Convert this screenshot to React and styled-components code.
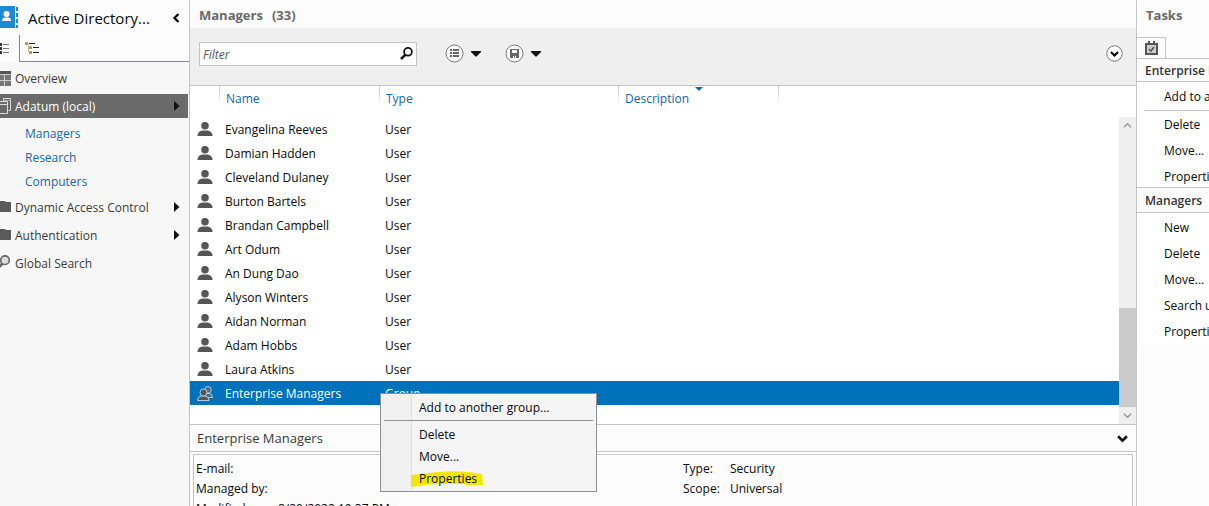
import React from "react";
import styled, { createGlobalStyle, css } from "styled-components";

const line = "#c4c4c4";
const blue = "#0072bc";

const Global = createGlobalStyle`
  * { box-sizing: border-box; }
  body { margin: 0; overflow: hidden; background: #fcfcfc; color: #080808;
    font-family: "Open Sans", "Noto Sans", sans-serif; font-size: 12px; line-height: 16px; }
  button, input { font: inherit; color: inherit; }
  button { border: 0; padding: 0; background: none; text-align: left; white-space: nowrap; }
  h1, h2, h3, p, ul, dl, dd { margin: 0; padding: 0; }
  ul { list-style: none; }
  svg { display: block; flex: none; }
`;

const Shell = styled.div`
  display: grid;
  grid-template-columns: 190px minmax(0, 1fr) 73px;
  height: 100vh;
  overflow: hidden;
`;

const Sidebar = styled.aside`
  display: flex;
  flex-direction: column;
  border-right: 1px solid ${line};
  background: #f7f7f7;
  min-width: 0;
`;
const Brand = styled.header`
  display: flex;
  align-items: center;
  height: 35px;
  background: #fcfcfc;
  padding-right: 9px;
`;
const BrandTitle = styled.h1`
  flex: 1;
  padding-left: 10px;
  font-size: 15px;
  line-height: 20px;
  font-weight: 400;
  white-space: nowrap;
`;
const ViewTabs = styled.div`
  display: flex;
  height: 27px;
  background: #fcfcfc;
`;
const ViewTab = styled.button`
  display: flex;
  align-items: center;
  ${(p) =>
    p.$active
      ? css`width: 20px; border-right: 1px solid #85858f;`
      : css`flex: 1; padding-left: 5px; border-bottom: 1px solid #85858f;`}
`;
const Nav = styled.nav`
  padding-top: 4px;
`;
const NavLink = styled.a`
  display: flex;
  align-items: center;
  height: 24px;
  margin: 0 1px 4px 0;
  padding-right: 8px;
  color: ${(p) => (p.$active ? "#fff" : "#3a3a3a")};
  background: ${(p) => (p.$active ? "#6a6a6a" : "transparent")};
  text-decoration: none;
  white-space: nowrap;
`;
const NavIcon = styled.span`
  width: 15px;
  flex: none;
`;
const NavLabel = styled.span`
  flex: 1;
  padding-top: 1px;
`;
const SubList = styled.ul`
  padding-bottom: 1px;
`;
const SubLink = styled.a`
  display: block;
  padding: 4px 0 4px 25px;
  color: #1068b8;
  text-decoration: none;
`;

const Main = styled.main`
  display: flex;
  flex-direction: column;
  min-width: 0;
  background: #fcfcfc;
`;
const PaneTitle = styled.h2`
  display: flex;
  gap: 9px;
  height: ${(p) => (p.$tall ? "37px" : "28px")};
  flex: none;
  padding: 6px 9px 0;
  font-size: 13px;
  line-height: 18px;
  font-weight: 700;
  color: #6a6a6a;
`;
const Toolbar = styled.div`
  display: flex;
  align-items: center;
  flex: none;
  height: 58px;
  padding: 0 13px 6px 9px;
  background: #efefef;
  border-bottom: 1px solid ${line};
`;
const FilterBox = styled.label`
  display: flex;
  align-items: center;
  width: 218px;
  height: 24px;
  margin-right: 28px;
  padding-right: 3px;
  border: 1px solid ${line};
  background: #fff;
`;
const FilterInput = styled.input`
  flex: 1;
  min-width: 0;
  border: 0;
  outline: 0;
  padding: 2px 3px 0;
  background: none;
  &::placeholder { color: #555; font-style: italic; opacity: 1; }
`;
const ToolButton = styled.button`
  display: flex;
  align-items: center;
  gap: 7px;
  margin-right: 24px;
`;
const Expand = styled.button`
  margin-left: auto;
`;

const ListArea = styled.div`
  display: flex;
  flex: none;
  align-items: stretch;
  background: #fff;
`;
const Table = styled.table`
  flex: 1;
  table-layout: fixed;
  border-collapse: collapse;
  align-self: flex-start;
  margin-bottom: 19px;
`;
const Head = styled.th`
  position: relative;
  width: ${(p) => p.$w || "auto"};
  height: 31px;
  padding: 5px 0 0 7px;
  vertical-align: top;
  text-align: left;
  font-weight: 400;
  color: #1068a8;
  background: ${(p) =>
    p.$plain ? "none" : `linear-gradient(#c4c4c4, #fff) left top / 1px 19px no-repeat`};
`;
const SortMark = styled.svg`
  position: absolute;
  top: 1px;
  left: 50%;
  transform: translateX(-3px);
`;
const Row = styled.tr`
  color: ${(p) => (p.$selected ? "#fff" : "#080808")};
  background: ${(p) => (p.$selected ? blue : "#fff")};
`;
const Cell = styled.td`
  position: relative;
  height: 24px;
  padding: 2px 0 0 ${(p) => (p.$icon ? "7px" : "6px")};
  white-space: nowrap;
`;

const ScrollTrack = styled.div`
  display: flex;
  flex-direction: column;
  width: 17px;
  margin-top: 31px;
  background: #efefef;
`;
const ScrollEnd = styled.button`
  display: flex;
  align-items: center;
  justify-content: center;
  height: 17px;
`;
const Thumb = styled.div`
  height: 99px;
  margin-top: auto;
  background: #cbcbcb;
`;

const Menu = styled.div`
  position: absolute;
  z-index: 2;
  top: 12px;
  left: 1px;
  width: 217px;
  padding: 3px 3px 1px;
  border: 1px solid #8f8f8f;
  background: linear-gradient(90deg, #f0f0f0 30px, #e2e2e2 30px, #e2e2e2 31px, #f5f5f5 31px);
  color: #080808;
`;
const MenuItem = styled.button`
  position: relative;
  display: block;
  width: 100%;
  height: 22px;
  padding-left: 35px;
`;
const MenuRule = styled.hr`
  margin: 1px 0 3px;
  border: 0;
  border-top: 1px solid #909090;
`;
const Marker = styled.svg`
  position: absolute;
  top: 3px;
  left: 27px;
`;
const MenuText = styled.span`
  position: relative;
`;

const DetailHead = styled.header`
  display: flex;
  align-items: center;
  justify-content: space-between;
  flex: none;
  height: 28px;
  padding: 0 8px 0 7px;
  border: solid ${line};
  border-width: 1px 0;
`;
const DetailTitle = styled.h3`
  font-size: 13px;
  line-height: 18px;
  font-weight: 400;
  color: #3a3a3a;
`;
const DetailBody = styled.div`
  display: grid;
  flex: none;
  grid-template-columns: 487px 1fr;
  margin: 2px 3px 0;
  padding: 4px 2px;
  border: 1px solid ${line};
`;
const Facts = styled.dl`
  display: grid;
  grid-template-columns: ${(p) => p.$label} 1fr;
  align-content: start;
  line-height: 20px;
  white-space: nowrap;
`;

const Tasks = styled.aside`
  border-left: 1px solid ${line};
  overflow: hidden;
  white-space: nowrap;
  background: #fcfcfc;
`;
const TaskTab = styled.button`
  display: flex;
  align-items: center;
  justify-content: center;
  width: 29px;
  height: 21px;
  border: solid ${line};
  border-width: 1px 1px 0 0;
`;
const TaskHead = styled.h3`
  padding: ${(p) => (p.$roomy ? "5px 0 3px 8px" : "4px 0 2px 8px")};
  border: solid ${line};
  border-width: 1px 0;
  font-size: 12px;
  line-height: 16px;
  font-weight: 600;
  color: #333;
`;
const TaskList = styled.div`
  padding: 5px 0 ${(p) => (p.$last ? "3px" : "0")};
  background: #fff;
`;
const TaskItem = styled.button`
  display: block;
  width: 100%;
  height: 20px;
  padding-left: 27px;
  & + & { margin-top: 6px; }
`;
const TaskRule = styled.hr`
  margin: 3px 0 4px 7px;
  border: 0;
  border-top: 1px solid ${line};
`;

const Triangle = ({ color = "#111" }) => (
  <svg width="6" height="10"><path d="M0 0L5.500 5L0 10Z" fill={color} /></svg>
);
const Down = () => (
  <svg width="10" height="6"><path d="M0 0H10V1L5.500 5.500H4.500L0 1Z" fill="#111" /></svg>
);
const Chevron = ({ color = "#111", size = 10, weight = 2.4, up }) => (
  <svg width={size} height={size} viewBox="0 0 10 10">
    <path d={up ? "M1 7L5 3L9 7" : "M1 3L5 7L9 3"} fill="none" stroke={color} strokeWidth={weight} />
  </svg>
);
const Person = () => (
  <svg width="16" height="16" viewBox="0 0 16 16" fill="#555">
    <circle cx="8" cy="3.800" r="3.800" /><path d="M0.500 14V13Q1.500 8.800 5.500 8.500H10.500Q14.500 8.800 15.500 13V14Z" />
  </svg>
);
const Group = () => (
  <svg width="16" height="16" viewBox="0 0 16 16" fill="#555" stroke="#b5cbdb" strokeWidth="1">
    <path d="M7 11.500Q7 7.500 10 7.500H12.500Q15.500 7.500 15.500 11.500H7Z" fill="#3b6f98" />
    <circle cx="11" cy="3.800" r="3.300" fill="#3b6f98" />
    <path d="M0.500 14.500Q0.500 10.500 4 10H8Q12 10.500 12 14.500Z" />
    <circle cx="6.500" cy="6.500" r="3.500" />
  </svg>
);
const Folder = () => (
  <svg width="12" height="12" fill="#5a5a5a"><path d="M0 0H5L6 1H11V11H0Z" /></svg>
);
const navIcons = {
  grid: (
    <svg width="12" height="15">
      <path d="M0 0H11V15H0Z" fill="#777" />
      <path d="M0 0H11V3H0Z" fill="#555" />
      <path d="M4.500 3V15M0 9.500H11M0 3.500H11" stroke="#ccc" fill="none" />
    </svg>
  ),
  domain: (
    <svg width="12" height="16" fill="none" stroke="#ddd">
      <path d="M3.500 3V0.500H10.500V12.500H8.500" />
      <path d="M3.500 2.500H10.500" stroke="#aaa" />
      <path d="M0 3.500H7.500V15.500H0M0 6.500H7.500" />
    </svg>
  ),
  folder: <Folder />,
  search: (
    <svg width="12" height="16" fill="#ddd" stroke="#666" strokeWidth="1.600">
      <path d="M2.500 8.500L-1 12" strokeWidth="2.800" /><circle cx="5" cy="5.200" r="4.300" />
    </svg>
  ),
};

function NavItem({ icon, label, active, arrow }) {
  return (
    <NavLink href="#" $active={active}>
      <NavIcon>{navIcons[icon]}</NavIcon>
      <NavLabel>{label}</NavLabel>
      {arrow && <Triangle />}
    </NavLink>
  );
}

const users = ["Evangelina Reeves", "Damian Hadden", "Cleveland Dulaney", "Burton Bartels",
  "Brandan Campbell", "Art Odum", "An Dung Dao", "Alyson Winters", "Aidan Norman",
  "Adam Hobbs", "Laura Atkins"];

export default function App() {
  return (
    <>
      <Global />
      <Shell>
        <Sidebar>
          <Brand>
            <svg width="18" height="23">
              <path d="M0 0H15V22H0Z" fill="#1e8ad6" />
              <path d="M16 1H18V5H16ZM16 7H18V11H16ZM16 13H18V17H16ZM16 19H18V22H16Z" fill="#1e8ad6" />
              <circle cx="6.500" cy="8" r="3" fill="#fff" />
              <path d="M2 15Q2 11.500 5 11.500H8Q11 11.500 11 15Z" fill="#fff" />
            </svg>
            <BrandTitle>Active Directory...</BrandTitle>
            <svg width="8" height="10"><path d="M6.500 1L2.500 5L6.500 9" fill="none" stroke="#000" strokeWidth="2.200" /></svg>
          </Brand>
          <ViewTabs>
            <ViewTab $active aria-label="List view">
              <svg width="10" height="11">
                <path d="M0 0H2V3H0ZM0 4H2V7H0ZM0 8H2V11H0Z" fill="#333" />
                <path d="M3 1.500H9M3 5.500H9M3 9.500H9" stroke="#777" />
              </svg>
            </ViewTab>
            <ViewTab aria-label="Tree view">
              <svg width="15" height="12">
                <path d="M3.500 2V9.500H5M3.500 5H5" stroke="#bbb" fill="none" />
                <path d="M0 0H3V3H0ZM4 4H7V7H4ZM4 9H7V12H4Z" fill="#c79a35" />
                <path d="M4 1.500H10M8 5.500H14M8 10.500H14" stroke="#222" />
              </svg>
            </ViewTab>
          </ViewTabs>
          <Nav>
            <NavItem icon="grid" label="Overview" />
            <NavItem icon="domain" label="Adatum (local)" active arrow />
            <SubList>
              {["Managers", "Research", "Computers"].map((t) => (
                <li key={t}><SubLink href="#">{t}</SubLink></li>
              ))}
            </SubList>
            <NavItem icon="folder" label="Dynamic Access Control" arrow />
            <NavItem icon="folder" label="Authentication" arrow />
            <NavItem icon="search" label="Global Search" />
          </Nav>
        </Sidebar>

        <Main>
          <PaneTitle><span>Managers</span> <span>(33)</span></PaneTitle>
          <Toolbar>
            <FilterBox>
              <FilterInput placeholder="Filter" aria-label="Filter" />
              <svg width="13" height="13" fill="none" stroke="#111">
                <circle cx="8" cy="4.800" r="3.900" strokeWidth="1.800" /><path d="M5.200 7.800L1 12" strokeWidth="2.600" />
              </svg>
            </FilterBox>
            <ToolButton aria-label="View options">
              <svg width="19" height="19">
                <circle cx="9.500" cy="9.500" r="8.500" fill="#fafafa" stroke="#777" />
                <path d="M5 5H7V7H5ZM5 8H7V10H5ZM5 11H7V13H5ZM8 5H14V7H8ZM8 8H14V10H8ZM8 11H14V13H8Z" fill="#666" />
              </svg>
              <Down />
            </ToolButton>
            <ToolButton aria-label="Save query">
              <svg width="19" height="19">
                <circle cx="9.500" cy="9.500" r="8.500" fill="#fafafa" stroke="#777" />
                <path d="M5 5H14V14H5Z" fill="#666" />
                <path d="M7 6H12V9H7ZM8 12H9V14H8ZM10 12H11V14H10Z" fill="#fafafa" />
              </svg>
              <Down />
            </ToolButton>
            <Expand aria-label="Expand query">
              <svg width="17" height="17">
                <circle cx="8.500" cy="8.500" r="7.700" fill="#fff" stroke="#777" />
                <path d="M5 7L8.500 10.500L12 7" fill="none" stroke="#000" strokeWidth="2.200" />
              </svg>
            </Expand>
          </Toolbar>

          <ListArea>
            <Table>
              <thead>
                <tr>
                  <Head $w="29px" $plain aria-label="Icon" />
                  <Head $w="160px">Name</Head>
                  <Head $w="239px">Type</Head>
                  <Head $w="160px">
                    Description
                    <SortMark width="8" height="4"><path d="M0 0H8L4 4Z" fill="#1068a8" /></SortMark>
                  </Head>
                  <Head aria-label="Spare" />
                </tr>
              </thead>
              <tbody>
                {users.map((name) => (
                  <Row key={name}>
                    <Cell $icon><Person /></Cell>
                    <Cell>{name}</Cell>
                    <Cell>User</Cell>
                    <Cell /><Cell />
                  </Row>
                ))}
                <Row $selected>
                  <Cell $icon><Group /></Cell>
                  <Cell>Enterprise Managers</Cell>
                  <Cell>
                    Group
                    <Menu role="menu">
                      <MenuItem role="menuitem">Add to another group...</MenuItem>
                      <MenuRule />
                      <MenuItem role="menuitem">Delete</MenuItem>
                      <MenuItem role="menuitem">Move...</MenuItem>
                      <MenuItem role="menuitem">
                        <Marker width="72" height="17">
                          <path d="M0 4Q14 2 28 1Q50 -1 71 3L72 14Q58 15 50 13Q25 12 0 16Z" fill="#f3e600" />
                        </Marker>
                        <MenuText>Properties</MenuText>
                      </MenuItem>
                    </Menu>
                  </Cell>
                  <Cell /><Cell />
                </Row>
              </tbody>
            </Table>
            <ScrollTrack>
              <ScrollEnd aria-label="Scroll up"><Chevron up color="#999" size={9} weight={1.6} /></ScrollEnd>
              <Thumb />
              <ScrollEnd aria-label="Scroll down"><Chevron color="#999" size={9} weight={1.6} /></ScrollEnd>
            </ScrollTrack>
          </ListArea>

          <DetailHead>
            <DetailTitle>Enterprise Managers</DetailTitle>
            <button aria-label="Collapse details"><Chevron size={11} /></button>
          </DetailHead>
          <DetailBody>
            <Facts $label="82px">
              <dt>E-mail:</dt><dd />
              <dt>Managed by:</dt><dd />
              <dt>Modified:</dt><dd>8/20/2022 10:37 PM</dd>
            </Facts>
            <Facts $label="47px">
              <dt>Type:</dt><dd>Security</dd>
              <dt>Scope:</dt><dd>Universal</dd>
            </Facts>
          </DetailBody>
        </Main>

        <Tasks>
          <PaneTitle $tall>Tasks</PaneTitle>
          <TaskTab aria-label="Tasks">
            <svg width="13" height="14">
              <path d="M0 2H13V14H0Z" fill="#555" /><path d="M2 4H11V12H2Z" fill="#ccc" />
              <path d="M3 0H5V2H8V0H10V4H3Z" fill="#555" />
              <path d="M4 8L6 10L9 6" fill="none" stroke="#555" strokeWidth="1.500" />
            </svg>
          </TaskTab>
          <TaskHead>Enterprise Managers</TaskHead>
          <TaskList>
            <TaskItem>Add to another group...</TaskItem>
            <TaskRule />
            <TaskItem>Delete</TaskItem>
            <TaskItem>Move...</TaskItem>
            <TaskItem>Properties</TaskItem>
          </TaskList>
          <TaskHead $roomy>Managers</TaskHead>
          <TaskList $last>
            <TaskItem>New</TaskItem>
            <TaskItem>Delete</TaskItem>
            <TaskItem>Move...</TaskItem>
            <TaskItem>Search under this node</TaskItem>
            <TaskItem>Properties</TaskItem>
          </TaskList>
        </Tasks>
      </Shell>
    </>
  );
}
